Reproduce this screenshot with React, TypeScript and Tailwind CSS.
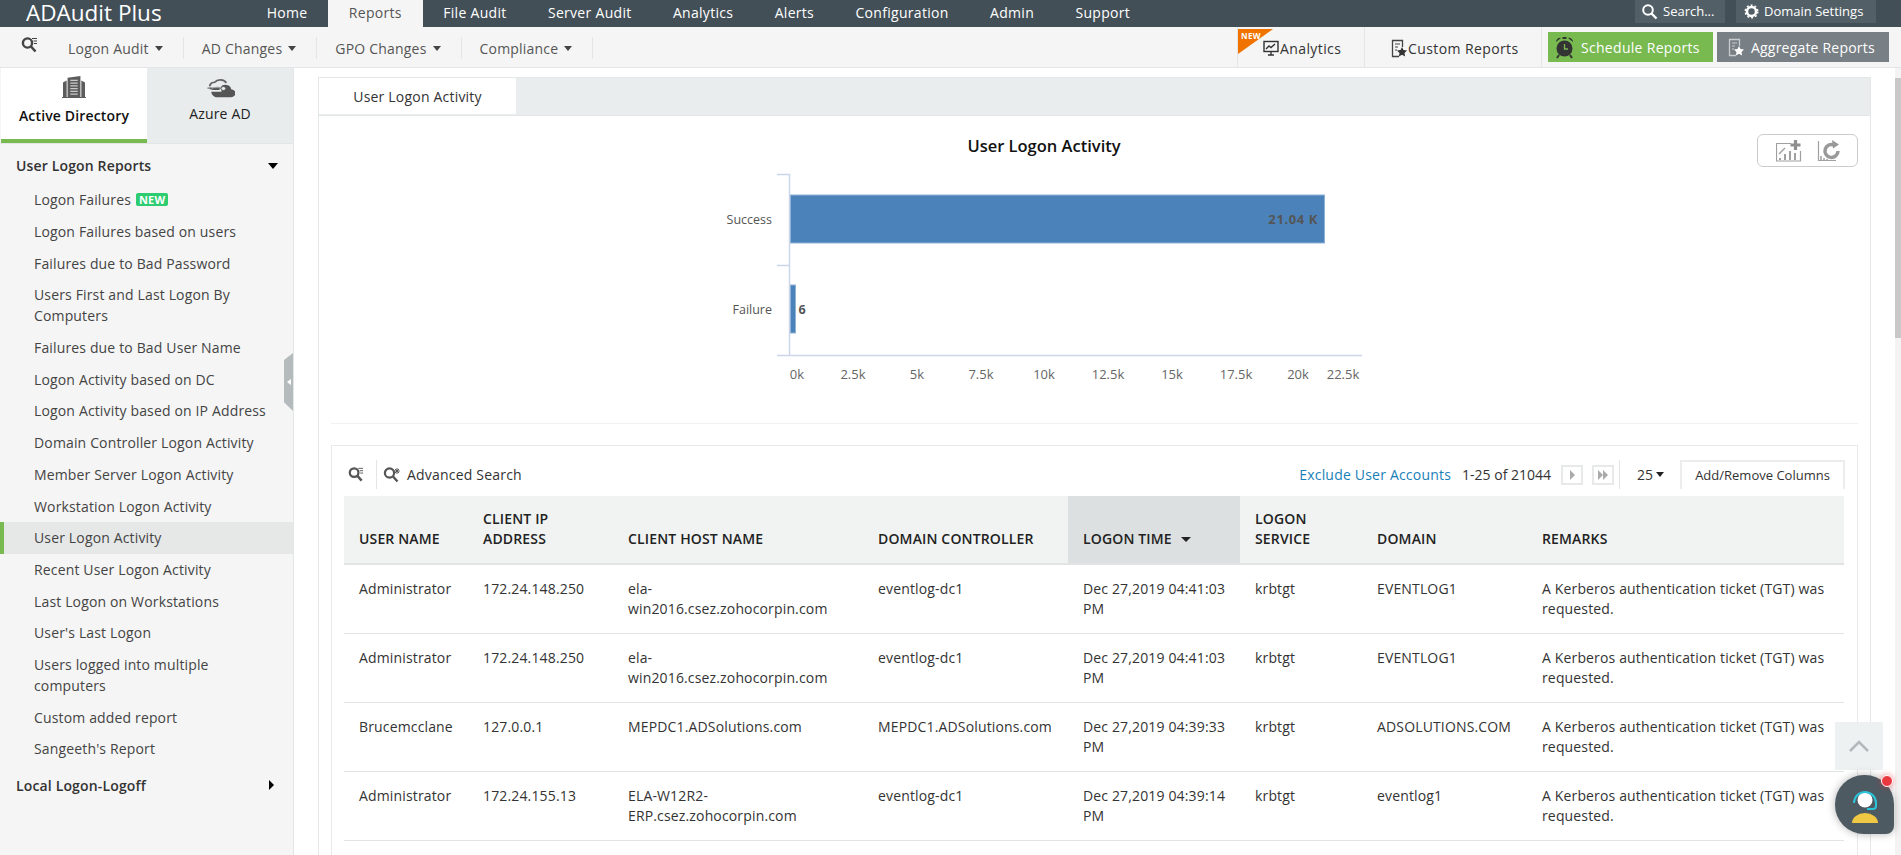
const NAV = ["Home", "Reports", "File Audit", "Server Audit", "Analytics", "Alerts", "Configuration", "Admin", "Support"];
const SUBNAV = ["Logon Audit", "AD Changes", "GPO Changes", "Compliance"];
const REPORTS = [
  "Logon Failures",
  "Logon Failures based on users",
  "Failures due to Bad Password",
  "Users First and Last Logon By Computers",
  "Failures due to Bad User Name",
  "Logon Activity based on DC",
  "Logon Activity based on IP Address",
  "Domain Controller Logon Activity",
  "Member Server Logon Activity",
  "Workstation Logon Activity",
  "User Logon Activity",
  "Recent User Logon Activity",
  "Last Logon on Workstations",
  "User's Last Logon",
  "Users logged into multiple computers",
  "Custom added report",
  "Sangeeth's Report",
];
const REMARK = "A Kerberos authentication ticket (TGT) was requested.";
const ROWS = [
  ["Administrator", "172.24.148.250", "ela-win2016.csez.zohocorpin.com", "eventlog-dc1", "Dec 27,2019 04:41:03 PM", "krbtgt", "EVENTLOG1", REMARK],
  ["Administrator", "172.24.148.250", "ela-win2016.csez.zohocorpin.com", "eventlog-dc1", "Dec 27,2019 04:41:03 PM", "krbtgt", "EVENTLOG1", REMARK],
  ["Brucemcclane", "127.0.0.1", "MEPDC1.ADSolutions.com", "MEPDC1.ADSolutions.com", "Dec 27,2019 04:39:33 PM", "krbtgt", "ADSOLUTIONS.COM", REMARK],
  ["Administrator", "172.24.155.13", "ELA-W12R2-ERP.csez.zohocorpin.com", "eventlog-dc1", "Dec 27,2019 04:39:14 PM", "krbtgt", "eventlog1", REMARK],
];
const TICKS: [string, number][] = [["0k", 797], ["2.5k", 853], ["5k", 917], ["7.5k", 981], ["10k", 1044], ["12.5k", 1108], ["15k", 1172], ["17.5k", 1236], ["20k", 1298], ["22.5k", 1343]];

function Caret({ className = "" }: { className?: string }) {
  return <span className={`inline-block w-0 h-0 border-x-[4px] border-x-transparent border-t-[5px] border-t-current ${className}`} />;
}

function SearchLines({ color = "#444", size = 17 }: { color?: string; size?: number }) {
  return (
    <svg width={size} height={size} viewBox="0 0 17 17" fill="none" stroke={color}>
      <circle cx="6.500" cy="7" r="4.600" strokeWidth="2.400" />
      <path d="M10 10.500l4.500 5" strokeWidth="2.600" />
      <path d="M11 2.500h5M12.500 5h3.500M13 7.500h3" strokeWidth="1" />
    </svg>
  );
}

function SearchPlus() {
  return (
    <svg width="18" height="17" viewBox="0 0 18 17" fill="none" stroke="#555">
      <circle cx="6.500" cy="7" r="4.600" strokeWidth="2.200" />
      <path d="M10 10.500l4.500 5" strokeWidth="2.400" />
      <path d="M14 2v6M11.200 5h5.600M12 3l4 4M16 3l-4 4" strokeWidth="1" />
    </svg>
  );
}

function Building() {
  return (
    <svg width="24" height="22" viewBox="0 0 26 24" fill="#5c5c5c">
      <path d="M0 23h26v1H0zM1 7l4-2v18H1zM25 7l-4-2v18h4z" />
      <path d="M6 2l14-2v23H6z" />
      <path d="M9 4h8v1.500H9zM9 7h8v1.500H9zM9 10h8v1.500H9zM9 13h8v1.500H9zM9 16h8v1.500H9zM9 19h8v1.500H9z" fill="#c9c9c9" />
    </svg>
  );
}

function CloudKey() {
  return (
    <svg width="29" height="19" viewBox="0 0 30 24" preserveAspectRatio="none">
      <path d="M6 13a5 5 0 0 1 3-9 7 7 0 0 1 12 1" fill="none" stroke="#666" strokeWidth="2" />
      <path d="M10 23h15a5 5 0 0 0 1-10 6 6 0 0 0-11-3 5 5 0 0 0-5 13z" fill="#555" />
      <path d="M1 10h14v5H5" fill="none" stroke="#e9ecec" strokeWidth="2" />
      <path d="M1.500 11.500h15" fill="none" stroke="#666" strokeWidth="1.400" />
      <circle cx="18" cy="12" r="2.500" fill="#e9ecec" stroke="#555" />
    </svg>
  );
}

function Monitor() {
  return (
    <svg width="16" height="16" viewBox="0 0 16 16" fill="none" stroke="#333">
      <rect x="1" y="1.500" width="14" height="10" strokeWidth="1.400" />
      <path d="M3 9l3-3 2 1.500L12 4M5 15h6M8 12v3" strokeWidth="1.400" />
    </svg>
  );
}

function ReportStar({ color, star }: { color: string; star: string }) {
  return (
    <svg width="16" height="19" viewBox="0 0 16 19" fill="none">
      <path d="M8 17.500H1.500V1.500h10V8" stroke={color} strokeWidth="1.300" />
      <path d="M4 5h5M4 8h3M4 11h2" stroke={color} />
      <path d="M11 8l1.500 3 3.500.5-2.500 2.500.6 3.500-3.100-1.700L7.900 17.500l.6-3.500L6 11.500l3.500-.5z" fill={star} />
    </svg>
  );
}

function AlarmClock() {
  return (
    <svg width="19" height="23" viewBox="0 0 19 23">
      <path d="M1 6a4 4 0 0 1 5-4zM18 6a4 4 0 0 0-5-4zM7.500 1h4v2h-4z" fill="#333" />
      <circle cx="9.500" cy="12.500" r="8" fill="#333" />
      <path d="M9.500 8v5h3.500" stroke="#78b950" strokeWidth="1.300" fill="none" />
      <path d="M4 19l-2 3M15 19l2 3" stroke="#333" strokeWidth="2" />
    </svg>
  );
}

function ChartTools() {
  return (
    <svg width="64" height="22" viewBox="0 0 64 22" fill="none" stroke="#a0a0a0">
      <path d="M15 3.500H.500v17.500h24V11" strokeWidth="1.200" />
      <path d="M3 14l6-6" strokeWidth="1.500" />
      <path d="M19.500 0v10M14.500 5h10" stroke="#8f8f8f" strokeWidth="3.200" />
      <path d="M3 18h2v2H3zM8 14h2v6H8zM13 11h2v9h-2zM18 13h2v7h-2z" fill="#a0a0a0" stroke="none" />
      <path d="M42.500 1v19.500H60" strokeWidth="1.200" />
      <path d="M45 16v4M48 18v2M51 19v1" strokeWidth="1.500" />
      <path d="M62 11a6.500 6.500 0 1 1-3.500-5.800" stroke="#999" strokeWidth="3.500" />
      <path d="M56 0l7 4.500-6 4z" fill="#999" stroke="none" />
    </svg>
  );
}

function Chart() {
  // x values in the svg are page x minus 319, y values are page y minus 116
  return (
    <svg width="1551" height="307" viewBox="0 0 1551 307" className="block" fontFamily="'Open Sans', sans-serif">
      <text x="725" y="36" textAnchor="middle" fontSize="16.500" fontWeight="600" fill="#111">User Logon Activity</text>
      <path d="M458 58.500h12.500V239M458 149.500h12.500M458 239.500h585" fill="none" stroke="#ccd6eb" strokeWidth="1.500" />
      <rect x="471.500" y="79" width="534" height="48" fill="#4c82ba" stroke="#8fb3d6" />
      <rect x="471.500" y="169" width="5" height="48" fill="#4c82ba" stroke="#8fb3d6" />
      <text x="999" y="108" textAnchor="end" fontSize="13" fontWeight="700" fill="#555" letterSpacing="0.6">21.04 K</text>
      <text x="479.500" y="198" fontSize="12.500" fontWeight="700" fill="#555">6</text>
      <text x="453" y="108" textAnchor="end" fontSize="12.500" fill="#555">Success</text>
      <text x="453" y="198" textAnchor="end" fontSize="12.500" fill="#555">Failure</text>
      {TICKS.map(([label, x]) => (
        <text key={label} x={x - 319} y="263" textAnchor="middle" fontSize="13" fill="#666">{label}</text>
      ))}
    </svg>
  );
}

function Sidebar() {
  return (
    <aside className="w-[294px] shrink-0 border-r border-[#e3e6e6] bg-[#f5f5f5] text-[14px] tracking-[0.15px] text-[#444] relative">
      <div className="flex h-[76px] border-b border-[#e3e6e6]">
        <div className="w-[146px] bg-white border-b-4 border-[#78b950] flex flex-col items-center pt-[8px] ml-px">
          <Building />
          <span className="font-semibold text-[14px] text-[#111] mt-[7px]">Active Directory</span>
        </div>
        <div className="flex-1 bg-[#e9ecec] flex flex-col items-center pt-[11px]">
          <CloudKey />
          <span className="text-[14px] text-[#222] mt-[5px]">Azure AD</span>
        </div>
      </div>
      <div className="h-[40px] pl-4 pr-[15px] flex items-center justify-between font-semibold text-[#333] pt-[3px]">
        User Logon Reports
        <Caret className="text-black border-x-[5px] border-t-[6px]" />
      </div>
      {REPORTS.map((r) => (
        <div
          key={r}
          className={`pr-4 py-[5.35px] leading-[21px] ${r === "User Logon Activity" ? "bg-[#e6e8e8] border-l-[4px] border-[#78b950] pl-[30px]" : "pl-[34px]"}`}
        >
          {r}
          {r === "Logon Failures" && (
            <span className="ml-[5px] inline-block bg-[#2ecc71] text-white text-[11px] font-bold leading-[13px] px-[3px] rounded-[2px] align-[1px]">NEW</span>
          )}
        </div>
      ))}
      <div className="h-[41px] pl-4 pr-[19px] flex items-center justify-between font-semibold text-[#333]">
        Local Logon-Logoff
        <span className="w-0 h-0 border-y-[5px] border-y-transparent border-l-[5px] border-l-black" />
      </div>
      <div className="absolute right-0 top-[285px] w-[9px] h-[58px] bg-[#b5bbbd] [clip-path:polygon(100%_0,100%_100%,0_85%,0_12%)] flex items-center justify-center">
        <span className="w-0 h-0 border-y-[3px] border-y-transparent border-r-[4px] border-r-white" />
      </div>
    </aside>
  );
}

function LogonTable() {
  const cols = ["w-[124px]", "w-[145px]", "w-[250px]", "w-[205px]", "w-[172px]", "w-[122px]", "w-[165px]", "w-[317px]"];
  const heads = ["User Name", "Client IP Address", "Client Host Name", "Domain Controller", "Logon Time", "Logon Service", "Domain", "Remarks"];
  return (
    <table className="table-fixed w-[1500px] border-collapse text-[14px] tracking-[0.15px] leading-[20px] text-[#333]">
      <colgroup>
        {cols.map((c, i) => <col key={i} className={c} />)}
      </colgroup>
      <thead>
        <tr className="h-[68px] bg-[#f1f3f3] border-b-2 border-[#e2e4e4]">
          {heads.map((h, i) => (
            <th key={h} className={`px-[15px] pb-[14px] text-left align-bottom font-semibold uppercase text-[#222] ${i === 4 ? "bg-[#dde0e0]" : ""}`}>
              {h}
              {i === 4 && <Caret className="ml-[9px] align-[2px] border-x-[5px] border-t-[5px]" />}
            </th>
          ))}
        </tr>
      </thead>
      <tbody>
        {ROWS.map((row, i) => (
          <tr key={i} className="h-[69px] border-b border-[#e2e4e4]">
            {row.map((cell, j) => (
              <td key={j} className={`pl-[15px] pt-[14px] align-top break-words ${j === 2 ? "pr-[22px]" : j === 4 ? "pr-[6px]" : "pr-[14px]"}`}>{cell}</td>
            ))}
          </tr>
        ))}
      </tbody>
    </table>
  );
}

export default function App() {
  return (
    <div className="relative w-[1901px] h-[855px] overflow-hidden bg-white flex flex-col font-['Open_Sans',sans-serif] text-[14px]">
      <header className="h-[27px] shrink-0 bg-[#434f57] flex text-[14px] tracking-[0.3px] text-white">
        <div className="w-[246px] pl-[26px] text-[22.5px] tracking-normal leading-[26px]">ADAudit Plus</div>
        {NAV.map((n) => (
          <div key={n} className={`px-[20.7px] leading-[25px] h-full ${n === "Reports" ? "bg-[#f5f5f5] text-[#555]" : ""}`}>{n}</div>
        ))}
        <div className="ml-auto flex gap-[11px] pr-[25px] text-[13px] tracking-normal h-[23px]">
          <div className="w-[90px] bg-[#535f67] flex items-center pl-[6px] gap-[5px]">
            <svg width="17" height="17" viewBox="0 0 17 17" fill="none" stroke="#fff"><circle cx="7" cy="7" r="4.800" strokeWidth="2" /><path d="M10.500 10.500l5 5" strokeWidth="2.400" /></svg>
            Search...
          </div>
          <div className="w-[140px] bg-[#535f67] flex items-center pl-[8px] gap-[5px]">
            <svg width="15" height="15" viewBox="0 0 15 15" fill="none" stroke="#fff"><circle cx="7.500" cy="7.500" r="4.500" strokeWidth="2.500" /><circle cx="7.500" cy="7.500" r="6.300" strokeWidth="1.400" strokeDasharray="2 2" /></svg>
            Domain Settings
          </div>
        </div>
      </header>

      <div className="h-[41px] shrink-0 bg-[#f5f5f5] border-b border-[#e3e6e6] flex text-[14px] tracking-[0.2px] text-[#555]">
        <div className="w-[68px] pl-[21px] pt-[9px]"><SearchLines /></div>
        <div className="flex items-center h-[22px] mt-[10px]">
          {SUBNAV.map((s) => (
            <div key={s} className="h-full flex items-center gap-[6px] pr-[20px] mr-[18px] border-r border-[#e3e6e6] last:mr-0">
              {s}
              <Caret className="text-[#444]" />
            </div>
          ))}
        </div>
        <div className="ml-auto flex text-[#333]">
          <div className="relative w-[128px] border-x border-[#e3e6e6] flex items-center gap-px pl-[25px] pt-[2px] tracking-[0.4px]">
            <span className="absolute left-0 top-[2px] w-[35px] h-[25px] bg-[#f07300] [clip-path:polygon(0_0,100%_0,0_100%)]" />
            <span className="absolute left-[3px] top-[4px] text-[8px] font-bold leading-[10px] text-white">NEW</span>
            <Monitor />
            Analytics
          </div>
          <div className="w-[177px] flex items-center gap-px pl-[26px] pt-[2px] border-r border-[#e3e6e6] tracking-[0.4px]">
            <ReportStar color="#444" star="#333" />
            Custom Reports
          </div>
          <div className="w-[165px] h-[30px] mt-[5px] ml-[6px] bg-[#78b950] text-white flex items-center gap-[7px] pl-[7px] tracking-[0.3px]">
            <AlarmClock />
            Schedule Reports
          </div>
          <div className="w-[172px] h-[30px] mt-[5px] ml-[4px] mr-[12px] bg-[#787f85] text-white flex items-center gap-[7px] pl-[11px]">
            <ReportStar color="#c9ccce" star="#fff" />
            Aggregate Reports
          </div>
        </div>
      </div>

      <div className="flex flex-1 min-h-0">
        <Sidebar />
        <main className="flex-1 flex min-w-0 pt-[9px] pl-[24px] pr-[24px] relative">
          <div className="w-[1553px] shrink-0 border-x border-t border-[#e5e8e8] flex flex-col">
            <div className="h-[38px] shrink-0 bg-[#eaeded] border-b border-[#e3e6e6]">
              <div className="w-[197px] h-[36px] bg-white flex items-center justify-center tracking-[0.2px] text-[#333]">User Logon Activity</div>
            </div>
            <section className="relative h-[307px] shrink-0">
              <Chart />
              <div className="absolute right-[12px] top-[18px] w-[101px] h-[33px] border border-[#ccc] rounded-[6px] flex items-center justify-center">
                <ChartTools />
              </div>
            </section>
            <div className="mx-[12px] h-px shrink-0 bg-[#f0f1f1]" />
            <div className="flex-1 mt-[21px] mx-[12px] border-x border-t border-[#e8eaea] pl-[12px] pr-[12px]">
              <div className="h-[50px] pt-[14px] flex items-start text-[#333]">
                <div className="h-[29px] w-[33px] border-r border-[#e3e6e6] flex pt-[6px] pl-[4px]"><SearchLines color="#555" size={16} /></div>
                <div className="flex items-center gap-[6px] ml-[6px] h-[29px] tracking-[0.2px]"><SearchPlus />Advanced Search</div>
                <div className="ml-auto flex items-center h-[29px]">
                  <span className="text-[#1a7fb8] tracking-[0.2px]">Exclude User Accounts</span>
                  <span className="ml-[11px]">1-25 of 21044</span>
                  <span className="ml-[10px] w-[22px] h-[20px] border-2 border-[#e8eaea] flex items-center justify-center">
                    <span className="w-0 h-0 border-y-[5px] border-y-transparent border-l-[5px] border-l-[#aaa]" />
                  </span>
                  <span className="ml-[9px] w-[22px] h-[20px] border-2 border-[#e8eaea] flex items-center justify-center">
                    <span className="w-0 h-0 border-y-[5px] border-y-transparent border-l-[5px] border-l-[#aaa]" />
                    <span className="w-0 h-0 border-y-[5px] border-y-transparent border-l-[5px] border-l-[#aaa]" />
                  </span>
                  <span className="ml-[5px] w-[61px] h-full border-l border-[#e3e6e6] flex items-center justify-center gap-[3px] pl-[1px] text-[14px]">25<Caret className="text-[#222]" /></span>
                  <span className="w-[165px] h-full border-x-2 border-t-2 border-[#eceeee] flex items-center justify-center text-[13px]">Add/Remove Columns</span>
                </div>
              </div>
              <LogonTable />
            </div>
          </div>
          <div className="absolute right-0 top-0 bottom-0 w-[6px] bg-[#f3f3f3]">
            <div className="mt-[10px] h-[260px] bg-[#c8c8c8]" />
          </div>
        </main>
      </div>

      <div className="absolute left-[1835px] top-[722px] w-[48px] h-[48px] bg-[#eef1f2] flex items-center justify-center">
        <svg width="20" height="12" viewBox="0 0 20 12" fill="none" stroke="#b5b8ba" strokeWidth="2.500"><path d="M1 11l9-9 9 9" /></svg>
      </div>
      <div className="absolute left-[1835px] top-[775px] w-[59px] h-[59px] bg-[#4e5a62] rounded-[29px_29px_8px_29px] shadow-[0_0_8px_rgba(0,0,0,0.3)] flex items-center justify-center">
        <svg width="30" height="38" viewBox="0 0 30 38">
          <circle cx="15" cy="14" r="7.500" fill="#fff" />
          <path d="M4 17a11 11 0 0 1 22 0M26 17v3a3 3 0 0 1-3 3h-6" fill="none" stroke="#2cc4d8" strokeWidth="2" />
          <path d="M2 37a13 10 0 0 1 26 0z" fill="#eec843" />
        </svg>
      </div>
      <span className="absolute left-[1881px] top-[775px] w-[12px] h-[12px] rounded-full bg-[#e9383f] border border-white shadow-[0_0_6px_rgba(233,56,63,0.6)]" />
    </div>
  );
}
